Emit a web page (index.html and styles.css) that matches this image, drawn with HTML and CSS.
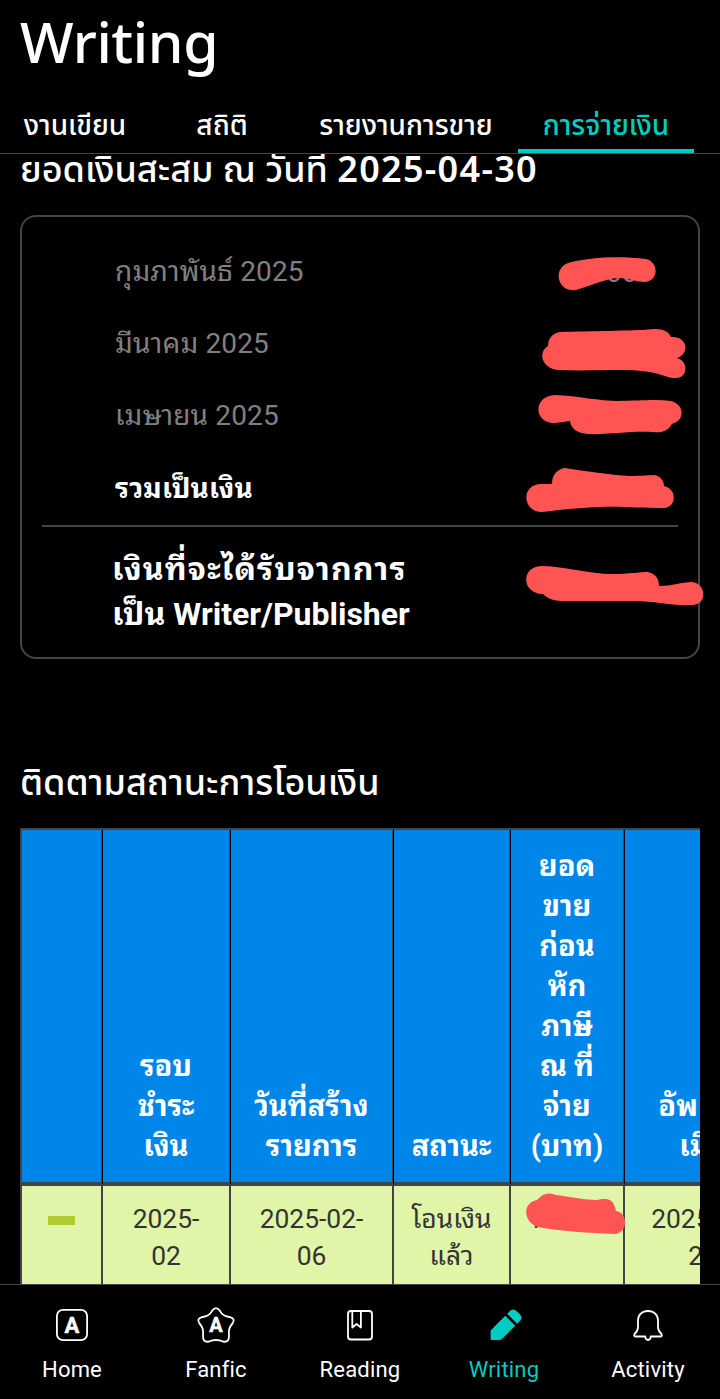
FILE: index.html
```html
<!DOCTYPE html>
<html lang="th">
<head>
  <meta charset="UTF-8" />
  <meta name="viewport" content="width=device-width, initial-scale=1" />
  <title>Writing</title>
  <link rel="stylesheet" href="styles.css">
</head>
<body>

  <header class="top">
    <h1>Writing</h1>
    <nav class="tabs">
      <a class="tab tab-works"><span>งานเขียน</span></a>
      <a class="tab tab-stats"><span>สถิติ</span></a>
      <a class="tab tab-sales"><span>รายงานการขาย</span></a>
      <a class="tab tab-pay active"><span>การจ่ายเงิน</span></a>
    </nav>
  </header>

  <main class="content">
    <h2 class="balance-title"><span>ยอดเงินสะสม ณ วันที่</span> <b>2025-04-30</b></h2>

    <section class="card">
      <div class="row">
        <span class="label">กุมภาพันธ์ 2025</span>
        <svg class="mark" viewBox="520 236 170 72">
          <text class="amount" x="606" y="282">00</text>
          <path d="M568 263C590 257 620 256 646 259C659 262 659 281 645 282C636 282 628 278 620 278C607 278 590 286 576 290C558 293 552 269 568 263Z"/>
        </svg>
      </div>
      <div class="row">
        <span class="label">มีนาคม 2025</span>
        <svg class="mark" viewBox="520 308 170 72">
          <path d="M560 332C590 331 630 331 655 329C664 329 669 332 671 337C688 336 690 354 677 358C689 361 688 379 675 378C664 378 660 370 620 370C600 370 580 371 558 370C541 368 538 352 548 346C548 338 553 333 560 332Z"/>
        </svg>
      </div>
      <div class="row">
        <span class="label">เมษายน 2025</span>
        <svg class="mark" viewBox="520 380 170 72">
          <path d="M555 395C578 396 600 401 618 401C640 401 655 399 671 401C684 404 686 420 672 424C667 432 661 433 652 432C630 431 605 435 588 434C577 433 571 429 570 421L555 423C534 424 532 396 555 395Z"/>
        </svg>
      </div>
      <div class="row total">
        <span class="label">รวมเป็นเงิน</span>
        <svg class="mark" viewBox="520 452 170 73">
          <path d="M565 468C585 471 610 475 630 476C642 476 650 475 655 475C661 477 664 481 664 486C678 489 676 508 664 508C640 508 620 506 600 507C575 508 560 510 542 512C522 512 521 485 540 484L552 484C552 475 557 469 565 468Z"/>
        </svg>
      </div>
      <div class="row payout">
        <span class="label"><span class="wide">เงินที่จะได้รับจากการ</span><br>เป็น Writer/Publisher</span>
        <svg class="mark" viewBox="520 527 170 130">
          <path d="M541 566C562 566 590 574 612 574C628 574 640 572 648 572C656 574 659 579 659 586C672 586 682 582 692 582C706 583 708 604 693 605C670 606 655 601 635 601L562 601C553 601 547 598 543 594C522 594 520 567 541 566Z"/>
        </svg>
      </div>
    </section>

    <h2 class="status-title">ติดตามสถานะการโอนเงิน</h2>

    <div class="table-wrap">
      <table>
        <colgroup>
          <col class="c-toggle"><col class="c-round"><col class="c-created"><col class="c-status"><col class="c-sales"><col class="c-updated">
        </colgroup>
        <thead>
          <tr>
            <th></th>
            <th>รอบ<br>ชำระ<br>เงิน</th>
            <th>วันที่สร้าง<br>รายการ</th>
            <th>สถานะ</th>
            <th>ยอด<br>ขาย<br>ก่อน<br>หัก<br>ภาษี<br>ณ ที่<br>จ่าย<br>(บาท)</th>
            <th>อัพเดท<br>เมื่อ</th>
          </tr>
        </thead>
        <tbody>
          <tr>
            <td><i class="minus"></i></td>
            <td>2025-<br>02</td>
            <td>2025-02-<br>06</td>
            <td>โอนเงิน<br>แล้ว</td>
            <td class="hidden-amount">
              <svg class="mark" viewBox="511 1186 112 50">
                <text class="amount dark" x="528" y="1228">1</text>
                <path d="M537 1200C543 1193 549 1192 556 1195C572 1197 586 1200 596 1200C605 1199 613 1196 616 1211C629 1213 628 1234 614 1234C590 1233 560 1231 538 1227C524 1223 521 1203 537 1200Z"/>
              </svg>
            </td>
            <td>2025-02-<br>28</td>
          </tr>
        </tbody>
      </table>
    </div>
  </main>

  <nav class="bottom">
    <a class="item">
      <svg viewBox="0 0 40 40"><rect x="4.9" y="4.9" width="30.2" height="30.2" rx="6"/><text x="20" y="28">A</text></svg>
      <span>Home</span>
    </a>
    <a class="item">
      <svg viewBox="0 0 40 40"><path d="M16.500 5.400Q20 1 23.500 5.400Q27 11.500 33.500 12Q40 13.500 36.500 18.500Q32 23 33 30Q33.500 38 27 36.500Q20 33.500 13 36.500Q6.500 38 7 30Q8 23 3.500 18.500Q0 13.500 6.500 12Q13 11.500 16.500 5.400Z"/><text x="20" y="27" class="small">A</text></svg>
      <span>Fanfic</span>
    </a>
    <a class="item">
      <svg viewBox="0 0 40 40"><rect x="8" y="6" width="24" height="28.500" rx="3"/><path d="M12.300 6v16.500l4.300-3.500 4.300 3.500V6"/></svg>
      <span>Reading</span>
    </a>
    <a class="item active">
      <svg viewBox="0 0 40 40"><path class="fill" d="M21.300 10.800L31.200 20.700L18.500 33.400Q17 35 15 35H8Q6.600 35 6.600 33.500V27Q6.600 25.200 8 24Z"/><path class="fill" d="M23.200 8.800L26 6Q29 3 32.500 6L35.800 9.300Q39 12.500 36.200 15.700L33.100 18.800Z"/></svg>
      <span>Writing</span>
    </a>
    <a class="item">
      <svg viewBox="0 0 40 40"><path d="M17.300 31.500H7.500Q5.400 31 6.600 29Q10 26 10 22V15.500C10 10 14 6 20 6S30 10 30 15.500V22Q30 26 33.400 29Q34.600 31 32.500 31.500H22.700Q22.500 35 20 35T17.300 31.500Z"/></svg>
      <span>Activity</span>
    </a>
  </nav>

</body>
</html>
```

FILE: styles.css
```css
* {
  box-sizing: border-box;
}

body {
  margin: 0;
  height: 1399px;
  display: flex;
  flex-direction: column;
  overflow: hidden;
  background: #000;
  color: #fff;
  font-family: Roboto, "Noto Sans Thai Looped", Loma, "Noto Sans Thai", "Noto Sans", sans-serif;
}

h1, h2 {
  margin: 0;
  font-family: "Noto Sans", "Noto Sans Thai", sans-serif;
  font-weight: 500;
  white-space: nowrap;
}

.top {
  flex: none;
  height: 154px;
  border-bottom: 1px solid #444;
}

h1 {
  height: 100px;
  padding: 1px 0 0 20px;
  font-size: 57px;
  line-height: 80px;
  letter-spacing: -0.4px;
}

.tabs {
  display: flex;
  height: 53px;
  font-family: "Noto Sans", "Noto Sans Thai", sans-serif;
  font-size: 28px;
  font-weight: 500;
  line-height: 49px;
}

.tab {
  display: flex;
  justify-content: center;
  white-space: nowrap;
}

.tab-works { width: 150px; }
.tab-stats { width: 144px; }
.tab-sales { width: 224px; }
.tab-pay { width: 176px; }

.tab.active {
  color: #00ccc2;
  border-bottom: 4px solid #00ccc2;
}

.content {
  flex: 1;
  min-height: 0;
  padding: 0 20px;
  overflow: hidden;
}

.balance-title {
  height: 61px;
  font-size: 36px;
  line-height: 30px;
}

.balance-title b {
  font-weight: 600;
  letter-spacing: 1.3px;
}

.card {
  height: 444px;
  padding-top: 19px;
  border: 2px solid #444;
  border-radius: 16px;
}

.row {
  display: flex;
  align-items: center;
  height: 72px;
  padding-left: 73px;
  margin: 0 20px;
  color: #808080;
  font-size: 28px;
  line-height: 32px;
}

.label {
  flex: none;
  width: 405px;
  white-space: nowrap;
  letter-spacing: 0.15px;
}

.total {
  height: 75px;
  border-bottom: 2px solid #444;
  color: #fff;
  font-weight: bold;
}

.payout {
  height: 130px;
  padding-left: 70px;
  color: #fff;
  font-size: 32px;
  font-weight: bold;
  line-height: 45px;
}

.payout .label {
  width: 408px;
  letter-spacing: 0;
}

.payout .wide {
  letter-spacing: 1.1px;
}

.mark {
  flex: none;
  display: block;
  width: 170px;
  height: 100%;
  overflow: visible;
  fill: #ff5454;
}

.amount {
  fill: #808080;
  font-size: 28px;
}

.amount.dark {
  fill: #333;
  font-size: 26px;
}

.status-title {
  height: 169px;
  padding-top: 99px;
  font-size: 36px;
  line-height: 48px;
}

.table-wrap {
  overflow: hidden;
}

table {
  width: 762px;
  table-layout: fixed;
  border-spacing: 0;
  border-top: 2px solid #444;
  border-left: 1px solid #444;
}

.c-toggle { width: 81px; }
.c-round { width: 128px; }
.c-created { width: 163px; }
.c-status { width: 117px; }
.c-sales { width: 114px; }
.c-updated { width: 158px; }

th, td {
  padding: 0;
  text-align: center;
  border-right: 1px solid #444;
  border-left: 1px solid #444;
  white-space: nowrap;
}

th {
  height: 356px;
  padding: 16px 0;
  vertical-align: bottom;
  background: #0086e9;
  border-bottom: 4px solid #444;
  font-size: 29px;
  line-height: 40px;
}

th + th {
  border-left-color: #000;
}

td {
  height: 120px;
  padding-top: 15px;
  vertical-align: top;
  background: #e0f5a8;
  color: #333;
  font-size: 26.4px;
  line-height: 37px;
}

.minus {
  display: block;
  width: 27px;
  height: 9px;
  margin: 15px auto 0;
  background: #b1cb30;
}

.hidden-amount {
  padding-top: 0;
}

.hidden-amount .mark {
  width: 112px;
  height: 50px;
}

.bottom {
  flex: none;
  display: flex;
  height: 115px;
  border-top: 1px solid #444;
  background: #000;
}

.item {
  display: flex;
  flex-direction: column;
  align-items: center;
  width: 144px;
  padding-top: 20px;
  font-size: 22px;
  line-height: 30px;
  letter-spacing: 0.2px;
}

.item svg {
  width: 40px;
  height: 40px;
  margin-bottom: 10px;
  fill: none;
  stroke: #fff;
  stroke-width: 1.8;
  stroke-linejoin: round;
}

.item text {
  fill: #fff;
  stroke-width: 0.5;
  font-size: 22px;
  font-weight: bold;
  text-anchor: middle;
  letter-spacing: 0;
}

.item .small {
  font-size: 20px;
}

.item.active {
  color: #00ccc2;
}

.item .fill {
  fill: #00ccc2;
  stroke: none;
}
```
